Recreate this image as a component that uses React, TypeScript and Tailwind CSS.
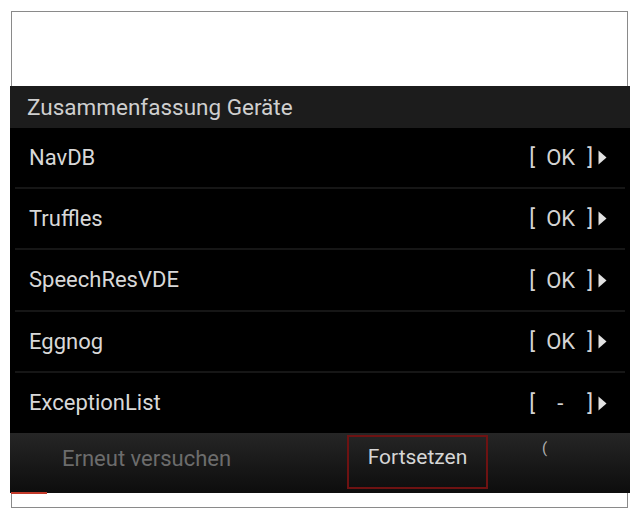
import React from "react";

const rows: { name: string; status: "OK" | "-"; h: string }[] = [
  { name: "NavDB", status: "OK", h: "h-[61px]" },
  { name: "Truffles", status: "OK", h: "h-[61px]" },
  { name: "SpeechResVDE", status: "OK", h: "h-[62px]" },
  { name: "Eggnog", status: "OK", h: "h-[61px]" },
  { name: "ExceptionList", status: "-", h: "h-[60px]" },
];

function Tri() {
  return (
    <svg width="9" height="15" viewBox="0 0 9 15" className="ml-[5px]">
      <path d="M0.5 0.5 L8.5 7.5 L0.5 14.5 Z" fill="#e2e2e2" />
    </svg>
  );
}

function Status({ status }: { status: "OK" | "-" }) {
  return (
    <div className="flex items-center text-[22px] text-[#d4d4d4]">
      <span className="w-[17px]">[</span>
      <span className={`w-[41px] text-left ${status === "-" ? "pl-[11px]" : ""}`}>{status}</span>
      <span>]</span>
      <Tri />
    </div>
  );
}

export default function App() {
  return (
    <div
      className="w-[640px] h-[519px] bg-white pt-[11px] pl-[11px]"
      style={{ fontFamily: "Roboto, 'Liberation Sans', sans-serif" }}
    >
      <div className="w-[617px] h-[497px] border border-[#8a8a8a] bg-white flex flex-col">
        <div className="h-[74px] shrink-0" />
        <div className="-ml-[2px] -mr-[3px] h-[407px] shrink-0 flex flex-col bg-black">
          <div className="h-[42px] shrink-0 bg-[#1c1c1c] flex items-center pl-[17px] text-[22.5px] text-[#cfcfcf] leading-none">
            Zusammenfassung Geräte
          </div>
          {rows.map((r, i) => (
            <div key={r.name} className={`${r.h} shrink-0 flex flex-col`}>
              <div className="flex-1 flex items-center justify-between pl-[19px] pr-[23px]">
                <span className="text-[22px] text-[#d8d8d8] leading-none">{r.name}</span>
                <Status status={r.status} />
              </div>
              {i < rows.length - 1 && <div className="h-[2px] mx-[5px] bg-[#161616]" />}
            </div>
          ))}
          <div className="relative h-[60px] shrink-0 flex items-stretch bg-gradient-to-b from-[#262626] to-[#0d0d0d]">
            <div className="w-[337px] flex items-center justify-start pl-[52px] pb-[9px] text-[22px] text-[#6c6c6c]">
              Erneut versuchen
            </div>
            <div className="w-[141px] mt-[2px] mb-[4px] pb-[8px] border-2 border-[#6e1212] flex items-center justify-center text-[21px] text-[#d6d6d6]">
              Fortsetzen
            </div>
            <div className="flex-1 flex justify-start pl-[54px] pt-[4px] text-[15px] text-[#b0b0b0]">
              (
            </div>
            <div className="absolute left-[1px] bottom-[-1px] w-[36px] h-[2px] bg-[#c23a2a]" />
          </div>
        </div>
      </div>
    </div>
  );
}
